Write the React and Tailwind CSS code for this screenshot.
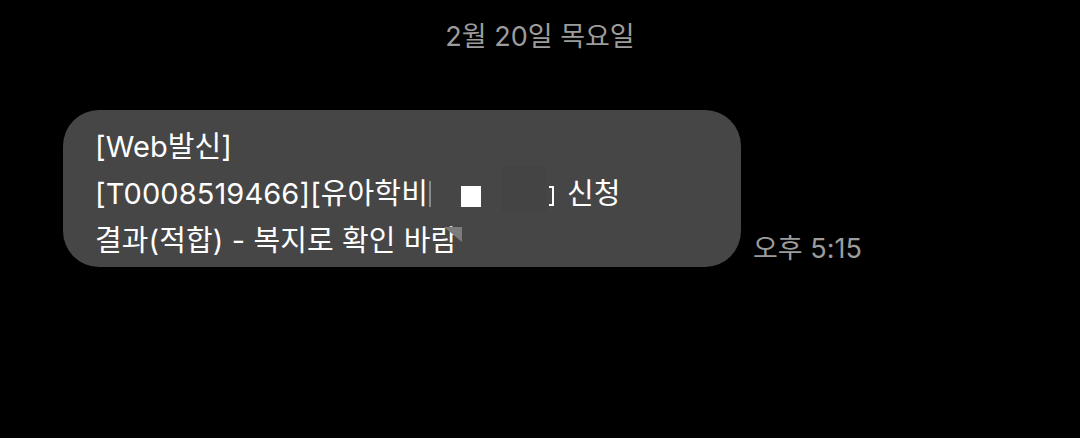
export default function App() {
  const font = { fontFamily: 'Inter, "Noto Sans CJK KR", "Noto Sans", sans-serif' };
  return (
    <div className="w-[1080px] h-[438px] bg-black overflow-hidden" style={font}>
      <div className="pt-[17px] text-center text-[27px] leading-[40px] text-[#9c9c9c]">
        2월 20일 목요일
      </div>
      <div className="flex items-end mt-[53px] ml-[63px] gap-[12px]">
        <div className="w-[678px] h-[157px] rounded-[36px] bg-[#464646] pl-[32px] pt-[13px] text-white text-[29px] leading-[47px] tracking-[0.1px]">
          <div>[Web발신]</div>
          <div className="flex items-center whitespace-nowrap">
            <span>[T0008519466][유아학비</span>
            <span className="w-[2px] h-[26px] bg-[#8a8a8a] ml-[1px]"></span>
            <span className="w-[30px]"></span>
            <span className="w-[20px] h-[21px] bg-white mt-[6px]"></span>
            <span className="w-[20px]"></span>
            <span className="w-[46px] h-[46px] bg-[#444444] mt-[-10px]"></span>
            <span className="ml-[2px] w-[5px] h-[20px] border-r-[2px] border-t-[2px] border-b-[2px] border-white mt-[4px]"></span>
            <span className="ml-[13px]">신청</span>
          </div>
          <div className="flex items-center whitespace-nowrap">
            <span>결과(적합) - 복지로 확인 바람</span>
            <svg width="18" height="15" viewBox="0 0 18 15" className="ml-[-13px] mt-[-12px]">
              <polygon points="0,0 18,0 18,15" fill="#7c7c7c" />
            </svg>
          </div>
        </div>
        <div className="text-[27px] leading-[36px] text-[#9c9c9c] pb-[0px]">오후 5:15</div>
      </div>
    </div>
  );
}
